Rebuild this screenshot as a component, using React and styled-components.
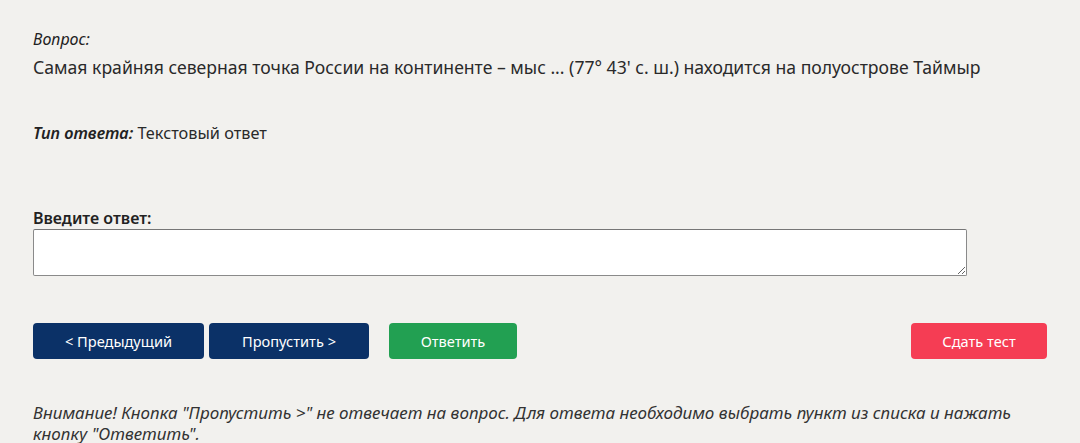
import React from 'react';
import styled, { createGlobalStyle } from 'styled-components';

const GlobalStyle = createGlobalStyle`
  html, body {
    margin: 0;
    padding: 0;
    background: #f2f1ee;
  }
  body {
    font-family: "Noto Sans", "Open Sans", sans-serif;
    color: #222;
  }
`;

const Page = styled.div`
  padding: 28px 33px 0 33px;
  width: 1014px;
`;

const Label = styled.div`
  font-style: italic;
  font-size: 16px;
  line-height: 22px;
  color: #222;
`;

const Question = styled.div`
  font-size: 17.6px;
  line-height: 26px;
  margin-top: 4px;
  color: #2a2a2a;
`;

const AnswerType = styled.div`
  margin-top: 42px;
  font-size: 16.3px;
  line-height: 22px;
  color: #2a2a2a;

  em {
    font-weight: 600;
    color: #222;
  }
`;

const Field = styled.label`
  display: flex;
  flex-direction: column;
  margin-top: 63px;
  font-size: 16px;
  font-weight: 600;
  line-height: 22px;
  color: #222;
  width: 934px;
`;

const TextArea = styled.textarea`
  margin-top: 0;
  height: 47px;
  box-sizing: border-box;
  border: 1px solid #8a8a8a;
  border-top-color: #767676;
  border-radius: 2px;
  background: #fff;
  resize: vertical;
  font: inherit;
  font-weight: 400;
`;

const Actions = styled.div`
  display: flex;
  align-items: center;
  margin-top: 47px;
  width: 1014px;
`;

const Button = styled.button`
  height: 36px;
  width: ${props => props.w}px;
  margin-left: ${props => props.gap || 0}px;
  border: none;
  border-radius: 4px;
  background: ${props => props.bg};
  color: #fff;
  font-family: "Noto Sans", "Open Sans", sans-serif;
  font-size: 14.6px;
  cursor: pointer;
`;

const Spacer = styled.div`
  flex: 1;
`;

const Notice = styled.p`
  margin: 43px 0 0 0;
  font-style: italic;
  font-size: 17px;
  line-height: 21px;
  color: #333;
  width: 1000px;
`;

export default function App() {
  return (
    <>
      <GlobalStyle />
      <Page>
        <Label>Вопрос:</Label>
        <Question>
          Самая крайняя северная точка России на континенте – мыс ... (77° 43' с. ш.) находится на полуострове Таймыр
        </Question>
        <AnswerType>
          <em>Тип ответа:</em> Текстовый ответ
        </AnswerType>
        <Field>
          Введите ответ:
          <TextArea />
        </Field>
        <Actions>
          <Button w={171} bg="#0b3167">&lt; Предыдущий</Button>
          <Button w={160} gap={5} bg="#0b3167">Пропустить &gt;</Button>
          <Button w={128} gap={20} bg="#22a052">Ответить</Button>
          <Spacer />
          <Button w={136} bg="#f53d54">Сдать тест</Button>
        </Actions>
        <Notice>
          Внимание! Кнопка "Пропустить &gt;" не отвечает на вопрос. Для ответа необходимо выбрать пункт из списка и нажать кнопку "Ответить".
        </Notice>
      </Page>
    </>
  );
}
